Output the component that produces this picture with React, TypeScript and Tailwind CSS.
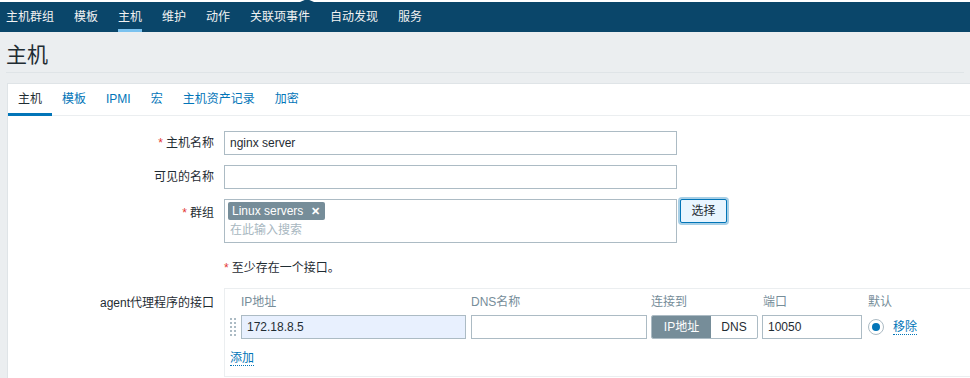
import React from "react";

const font = { fontFamily: '"Liberation Sans", Arial, "Noto Sans CJK SC", sans-serif' };

const topNav = ["主机群组", "模板", "主机", "维护", "动作", "关联项事件", "自动发现", "服务"];
const tabs = ["主机", "模板", "IPMI", "宏", "主机资产记录", "加密"];

function Label({ text, required }: { text: string; required?: boolean }) {
  return (
    <div className="w-[206px] shrink-0 text-right text-[12px] text-[#1f2c33]">
      {required && <span className="mr-[3px] text-[#e33734]">*</span>}
      {text}
    </div>
  );
}

function DragHandle() {
  return (
    <div className="grid grid-cols-2 gap-x-[2px] gap-y-[2px] w-[6px]">
      {Array.from({ length: 10 }).map((_, i) => (
        <span key={i} className="block w-[2px] h-[2px] bg-[#acbbc4]" />
      ))}
    </div>
  );
}

export default function App() {
  return (
    <div style={font} className="w-[970px] h-[378px] overflow-hidden bg-[#ebeef0] text-[12px] text-[#1f2c33]">
      {/* top nav */}
      <div className="relative h-[2px] bg-white">
        <div className="absolute left-[300px] top-0 w-0 h-0 border-l-[7px] border-r-[7px] border-b-[3px] border-l-transparent border-r-transparent border-b-[#0a466a] -translate-y-[1px]" />
      </div>
      <div className="h-[30px] bg-[#0a466a] flex items-stretch pl-[6px] gap-[20px]">
        {topNav.map((t) => (
          <div
            key={t}
            className={
              "flex items-center text-[12px] text-[#f2f2f2] border-b-[3px] pt-[3px] " +
              (t === "主机" ? "border-[#7bc2ef]" : "border-transparent")
            }
          >
            {t}
          </div>
        ))}
      </div>

      {/* title */}
      <div className="mx-[6px] h-[41px] border-b border-[#dfe4e7] flex items-center">
        <h1 className="text-[21px] font-normal text-[#1f2c33] leading-none pt-[4px]">主机</h1>
      </div>

      {/* panel */}
      <div className="ml-[7px] mt-[10px] bg-white border-t border-l border-[#dfe4e7] h-[300px]">
        <div className="h-[32px] flex items-stretch border-b border-[#ebeef0]">
          {tabs.map((t) => (
            <div
              key={t}
              className={
                "flex items-center px-[10px] border-b-[3px] -mb-[1px] " +
                (t === "主机" ? "border-[#0275b8] text-[#1f2c33]" : "border-transparent text-[#0275b8]")
              }
            >
              {t}
            </div>
          ))}
        </div>

        <div className="pt-[15px] flex flex-col">
          <div className="flex items-center gap-[10px]">
            <Label text="主机名称" required />
            <div className="w-[453px] h-[24px] border border-[#acbbc4] flex items-center px-[5px]">nginx server</div>
          </div>
          <div className="flex items-center gap-[10px] mt-[10px]">
            <Label text="可见的名称" />
            <div className="w-[453px] h-[24px] border border-[#acbbc4]" />
          </div>
          <div className="flex items-start gap-[10px] mt-[10px]">
            <div className="pt-[5px]">
              <Label text="群组" required />
            </div>
            <div className="w-[453px] h-[44px] border border-[#acbbc4] px-[3px] pt-[2px]">
              <div className="inline-flex items-center h-[18px] bg-[#768d99] text-white rounded-[2px] pl-[4px] pr-[5px] gap-[8px]">
                <span>Linux servers</span>
                <span className="text-[11px] font-bold">✕</span>
              </div>
              <div className="text-[#a8b7bf] mt-[1px] pl-[2px] leading-[18px]">在此输入搜索</div>
            </div>
            <button className="-ml-[7px] w-[47px] h-[24px] bg-[#e8f5ff] border border-[#0275b8] rounded-[2px] shadow-[0_0_0_2px_rgba(2,117,184,0.35)] text-[#1f2c33] text-[12px]">
              选择
            </button>
          </div>

          <div className="ml-[216px] mt-[16px] text-[12px]">
            <span className="text-[#e33734] mr-[3px]">*</span>至少存在一个接口。
          </div>

          <div className="flex items-start gap-[10px] mt-[11px]">
            <div className="pt-[6px]">
              <Label text="agent代理程序的接口" />
            </div>
            <div className="flex-1 h-[89px] border border-[#ebeef0] border-r-0 pl-[5px] pt-[5px]">
              <div className="flex text-[#768d99] h-[16px] items-center pl-[11px]">
                <div className="w-[230px]">IP地址</div>
                <div className="w-[180px]">DNS名称</div>
                <div className="w-[112px]">连接到</div>
                <div className="w-[105px]">端口</div>
                <div>默认</div>
              </div>
              <div className="flex items-center mt-[5px] h-[24px]">
                <div className="w-[11px]">
                  <DragHandle />
                </div>
                <div className="w-[225px] h-[24px] bg-[#e8f0fe] border border-[#acbbc4] flex items-center px-[5px]">172.18.8.5</div>
                <div className="ml-[5px] w-[176px] h-[24px] border border-[#acbbc4]" />
                <div className="ml-[4px] flex h-[24px] w-[107px] border border-[#acbbc4] rounded-[2px] overflow-hidden">
                  <div className="w-[59px] bg-[#768d99] text-white flex items-center justify-center">IP地址</div>
                  <div className="flex-1 flex items-center justify-center text-[#1f2c33]">DNS</div>
                </div>
                <div className="ml-[4px] w-[100px] h-[24px] border border-[#acbbc4] flex items-center px-[5px]">10050</div>
                <div className="ml-[6px] w-[16px] h-[16px] rounded-full border border-[#acbbc4] flex items-center justify-center">
                  <span className="block w-[8px] h-[8px] rounded-full bg-[#0275b8]" />
                </div>
                <span className="ml-[9px] text-[#0275b8] border-b border-dotted border-[#0275b8] leading-[14px]">移除</span>
              </div>
              <div className="mt-[10px]">
                <span className="text-[#0275b8] border-b border-dotted border-[#0275b8] leading-[14px]">添加</span>
              </div>
            </div>
          </div>
        </div>
      </div>
    </div>
  );
}
